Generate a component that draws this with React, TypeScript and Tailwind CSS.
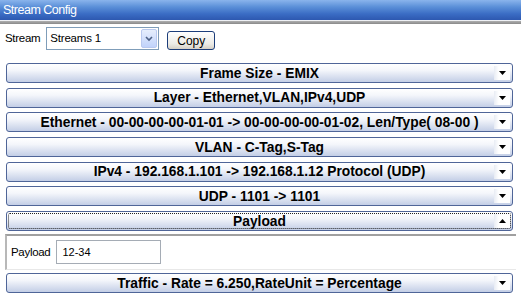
import React from "react";

const Arrow = ({ up }: { up?: boolean }) => (
  <svg width="7" height="4" viewBox="0 0 7 4" className="block">
    {up ? <polygon points="0,4 7,4 3.5,0" fill="#000" /> : <polygon points="0,0 7,0 3.5,4" fill="#000" />}
  </svg>
);

const Bar = ({ label, up, focus }: { label: string; up?: boolean; focus?: boolean }) => (
  <div className="relative flex h-[20px] items-center rounded-[3px] border border-[#4f6598] bg-[linear-gradient(to_bottom,#ffffff_0%,#f4f6fb_35%,#c3cee6_100%)]">
    {focus && <div className="pointer-events-none absolute inset-[1px] rounded-[2px] border border-dotted border-[#222]" />}
    <div className="flex-1 pt-[1px] text-center text-[13.8px] font-bold leading-none text-black">{label}</div>
    <div className="absolute right-[2px] top-[2px] flex h-[14px] w-[16px] items-center justify-center bg-[linear-gradient(to_right,#e8ecf4,#ffffff_30%)]">
      <Arrow up={up} />
    </div>
  </div>
);

export default function App() {
  return (
    <div className="h-[300px] w-[521px] bg-white font-['Liberation_Sans',Arial,sans-serif] text-[11px] text-black">
      <div className="flex h-[20px] items-center bg-[linear-gradient(to_bottom,#8ab4ec_0%,#5a8fd8_35%,#3a6cc4_70%,#2d58b0_100%)] pl-[3px] text-[12.5px] tracking-[-0.5px] text-white">
        Stream Config
      </div>
      <div className="h-[1px] bg-[#eef0f4]" />
      <div className="h-[3px] bg-[linear-gradient(to_bottom,#b0b0b0,#888888)]" />
      <div className="flex items-center pl-[5px] pt-[3px]">
        <span className="text-[11.5px] tracking-[-0.3px]">Stream</span>
        <div className="ml-[6px] flex h-[23px] w-[113px] items-center border border-[#7f9db9] bg-white">
          <span className="flex-1 pl-[3px] text-[11.5px] tracking-[-0.2px]">Streams 1</span>
          <div className="mr-[1px] flex h-[19px] w-[16px] items-center justify-center rounded-[2px] border border-[#b9c9ef] bg-[linear-gradient(to_bottom,#e6eefc,#c1d3fb)]">
            <svg width="8" height="6" viewBox="0 0 8 6"><polyline points="1,1 4,4 7,1" fill="none" stroke="#4d6185" strokeWidth="1.6" /></svg>
          </div>
        </div>
        <button className="ml-[8px] mt-[4px] flex h-[19px] w-[48px] items-center justify-center rounded-[3px] border border-[#1c3d7a] bg-[linear-gradient(to_bottom,#ffffff,#ecebe6_70%,#d6d0c5)] text-[12px]">
          Copy
        </button>
      </div>
      <div className="flex flex-col gap-[4.67px] pl-[6px] pr-[8px] pt-[13px]">
        <Bar label="Frame Size - EMIX" />
        <Bar label="Layer - Ethernet,VLAN,IPv4,UDP" />
        <Bar label="Ethernet - 00-00-00-00-01-01 -> 00-00-00-00-01-02, Len/Type( 08-00 )" />
        <Bar label="VLAN - C-Tag,S-Tag" />
        <Bar label="IPv4 - 192.168.1.101 -> 192.168.1.12 Protocol (UDP)" />
        <Bar label="UDP - 1101 -> 1101" />
        <Bar label="Payload" up focus />
      </div>
      <div className="ml-[5px] mr-[5px] mt-[3px] flex h-[36px] items-center border-b border-l-2 border-t-2 border-b-[#e8e8e8] border-l-[#b8b8b8] border-t-[#a0a0a0] pl-[4px]">
        <span className="text-[11.5px] tracking-[-0.3px]">Payload</span>
        <div className="ml-[6px] flex h-[24px] w-[105px] items-center border border-[#a5acb5] pl-[5px]">12-34</div>
      </div>
      <div className="pl-[6px] pr-[8px] pt-[3px]">
        <Bar label="Traffic - Rate = 6.250,RateUnit = Percentage" />
      </div>
    </div>
  );
}
